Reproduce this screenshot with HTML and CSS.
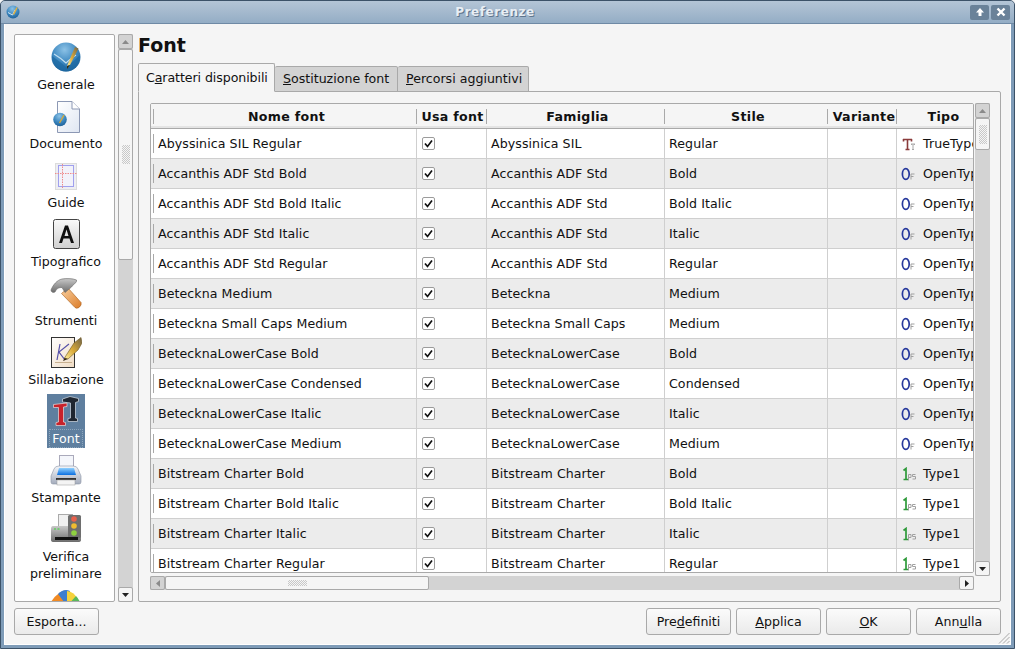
FILE: index.html
```html
<!DOCTYPE html>
<html lang="it">
<head>
<meta charset="utf-8">
<title>Preferenze</title>
<link rel="stylesheet" href="styles.css">
</head>
<body>
<svg class="defs" width="0" height="0" aria-hidden="true">
  <defs>
    <radialGradient id="globe" cx="45%" cy="25%" r="80%"><stop offset="0" stop-color="#8cc2e6"/><stop offset=".55" stop-color="#3d88c0"/><stop offset="1" stop-color="#1a5c94"/></radialGradient>
    <linearGradient id="quill" x1="1" y1="0" x2="0" y2="1"><stop offset="0" stop-color="#6e6248"/><stop offset=".55" stop-color="#d8a838"/><stop offset="1" stop-color="#fff0a0"/></linearGradient>
    <linearGradient id="paper" x1="0" y1="0" x2="1" y2="1"><stop offset="0" stop-color="#ffffff"/><stop offset="1" stop-color="#dfe6f2"/></linearGradient>
    <linearGradient id="keycap" x1="0" y1="0" x2="0" y2="1"><stop offset="0" stop-color="#fafafa"/><stop offset="1" stop-color="#d0d0d0"/></linearGradient>
    <linearGradient id="handle" x1="0" y1="0" x2="1" y2="1"><stop offset="0" stop-color="#f8d0a0"/><stop offset="1" stop-color="#dc7c28"/></linearGradient>
    <linearGradient id="metal" x1="0" y1="0" x2="0" y2="1"><stop offset="0" stop-color="#c8c8c8"/><stop offset="1" stop-color="#6c6c6c"/></linearGradient>
    <linearGradient id="printer" x1="0" y1="0" x2="0" y2="1"><stop offset="0" stop-color="#f4f6fa"/><stop offset="1" stop-color="#a4acbc"/></linearGradient>
    <linearGradient id="bluebar" x1="0" y1="0" x2="0" y2="1"><stop offset="0" stop-color="#8fd0ff"/><stop offset="1" stop-color="#0b6fe0"/></linearGradient>
    <linearGradient id="kpaper" x1="0" y1="0" x2="1" y2="1"><stop offset="0" stop-color="#ffffff"/><stop offset="1" stop-color="#f0dcc4"/></linearGradient>
    <symbol id="i-check" viewBox="0 0 13 13">
      <rect x=".5" y=".5" width="12" height="12" rx="1.5" fill="#fff" stroke="#9c9c9c"/>
      <path d="M3 6.500 5.500 9.500 10 3.500" fill="none" stroke="#111" stroke-width="1.700"/>
    </symbol>
    <symbol id="i-tt" viewBox="0 0 16 14">
      <path d="M2 2.500H11M2.500 2V4.500M10.500 2V4.500M6.500 2.500V12.500M4.500 12.500H8.500" fill="none" stroke="#8a3b3b" stroke-width="1.600"/>
      <path d="M10 7H14M10.500 7V8M13.500 7V8M12 7V12.500M11 12.500H13" fill="none" stroke="#a8a8a8" stroke-width="1"/>
    </symbol>
    <symbol id="i-ot" viewBox="0 0 16 14">
      <ellipse cx="4.800" cy="7" rx="3.400" ry="5.300" fill="none" stroke="#26389c" stroke-width="1.700"/>
      <path d="M10 12.500V7H13.500M10 9.500H12.500" fill="none" stroke="#a0a0a0" stroke-width="1"/>
    </symbol>
    <symbol id="i-t1" viewBox="0 0 16 14">
      <path d="M2.500 3.500 5 1.500V12.500M2.500 12.500H7" fill="none" stroke="#2e9a3a" stroke-width="1.700"/>
      <path d="M7.500 13.500V7.500H10V10.500H7.500M14.500 7.500H11.500V9.500H14.500V12H11.500" fill="none" stroke="#a0a0a0" stroke-width="1"/>
    </symbol>
  </defs>
</svg>

<div class="window">
  <header class="titlebar">
    <svg class="app-icon" viewBox="0 0 14 14"><circle cx="7" cy="7" r="6.500" fill="url(#globe)"/><path d="M2 7.500 6.500 10 9 5" fill="none" stroke="#cfe6f5" stroke-width="1"/><path d="M7.500 9.500 11 2.500" stroke="#e0b040" stroke-width="1.500"/></svg>
    <span class="title">Preferenze</span>
    <div class="wm-buttons">
      <span class="wm-btn"><svg viewBox="0 0 10 10" width="10" height="10"><path d="M5 1 9 5.500H6.500V9h-3V5.500H1Z" fill="#fff"/></svg></span>
      <span class="wm-btn"><svg viewBox="0 0 10 10" width="10" height="10"><path d="M1.500 1.500 8.500 8.500M8.500 1.500 1.500 8.500" stroke="#fff" stroke-width="2.400"/></svg></span>
    </div>
  </header>

  <div class="content">
    <div class="main">
      <nav class="sidebar">
        <div class="nav-item">
          <svg class="nav-icon" viewBox="0 0 32 32"><circle cx="16" cy="15" r="14.500" fill="url(#globe)"/><path d="M2 14C6 17 12 21 16 25 20 22 25 18 30 13 30 23 24 29.500 16 29.500 8 29.500 2 23 2 14Z" fill="#1d6aa3" opacity=".7"/><path d="M4 12C9 15 13 18 16 21 19 18 22 16 26 13" fill="none" stroke="#c3e0f2" stroke-width="1.200"/><path d="M17 24 25 5 28.500 6.500 20 23Z" fill="url(#quill)"/><path d="M17 24 17 27 20 23Z" fill="#3a2d10"/></svg>
          <span class="nav-label">Generale</span>
        </div>
        <div class="nav-item">
          <svg class="nav-icon" viewBox="0 0 32 32"><path d="M7.500 .5H22L29.500 8V31.500H7.500Z" fill="url(#paper)" stroke="#8c98b4"/><path d="M22 .5V8H29.500" fill="#fff" stroke="#8c98b4"/><circle cx="10" cy="18.500" r="6.800" fill="url(#globe)"/><path d="M9.500 22 14 14" stroke="#d9aa3a" stroke-width="1.400"/></svg>
          <span class="nav-label">Documento</span>
        </div>
        <div class="nav-item">
          <svg class="nav-icon" viewBox="0 0 32 32"><rect x="5.500" y="3.500" width="21" height="26" fill="#eeeef2" stroke="#dcdcdc"/><rect x="8.500" y="5.500" width="15" height="21" fill="#f2f2fa" stroke="#a0a0ee"/><path d="M5 13.500H27M12.500 4V29" stroke="#ee8c8c" stroke-dasharray="1.500 1"/></svg>
          <span class="nav-label">Guide</span>
        </div>
        <div class="nav-item">
          <svg class="nav-icon" viewBox="0 0 32 32"><rect x="3.500" y=".5" width="26" height="29" rx="2" fill="url(#keycap)" stroke="#444"/><path d="M9 24 15 6.500H18L24 24H21L19.500 19.500H13.500L12 24ZM14.500 17H18.500L16.500 10.500Z" fill="#111" fill-rule="evenodd"/></svg>
          <span class="nav-label">Tipografico</span>
        </div>
        <div class="nav-item">
          <svg class="nav-icon" viewBox="0 0 32 32"><path d="M11.500 15.500 18 10 31 24.500Q32 27 29 29.500 26.500 31 25 29.500Z" fill="url(#handle)" stroke="#a85c18" stroke-width=".6"/><path d="M1 12C3 7 7 2 12 1 17 .2 23 .5 26.500 2 27 4 25 5.500 24 6L21.500 9 15 14.500 12 9.500C9 9.500 7 10 5 14 3 15 1 14 1 12Z" fill="url(#metal)" stroke="#666" stroke-width=".6"/></svg>
          <span class="nav-label">Strumenti</span>
        </div>
        <div class="nav-item">
          <svg class="nav-icon" viewBox="0 0 32 32"><rect x="1.500" y=".5" width="23" height="30" fill="url(#kpaper)" stroke="#333"/><path d="M5 25.500H22" stroke="#c8b090"/><path d="M10 7 7 23M19 7 9 15 15 23" fill="none" stroke="#5550a8" stroke-width="1.200"/><path d="M14.500 21 24 6 31 .5 32 6 28 13 18 22Z" fill="url(#quill)" stroke="#6b5520" stroke-width=".6"/><path d="M14.500 21 13 24 18 22Z" fill="#302410"/></svg>
          <span class="nav-label">Sillabazione</span>
        </div>
        <div class="nav-item is-selected">
          <svg class="nav-icon" viewBox="0 0 32 32"><path d="M12.500 3 20 .5 28.500 2.500V5.500L25.500 6.500V22L27.500 22.500V25.500L18 25.500V22.500L20.500 22V7L12.500 6Z" fill="#1f2630" stroke="#c4ced8" stroke-width=".8"/><path d="M3.500 8.500 17 7V10.500L13.500 11V26L15.500 26.500V29.500H6V26.500L8.500 26V11.500L3.500 11.500Z" fill="#c8222a" stroke="#e8dcdc" stroke-width=".7"/></svg>
          <span class="nav-label">Font</span>
        </div>
        <div class="nav-item">
          <svg class="nav-icon" viewBox="0 0 32 32"><rect x="9.500" y=".5" width="14" height="13" fill="#f4f6fb" stroke="#aab"/><path d="M4 14Q5 11 9 11H23Q27 11 28 14L31 21V27Q31 29 29 29H3Q1 29 1 27V21Z" fill="url(#printer)" stroke="#8c94a4" stroke-width=".6"/><path d="M7 20H26L24 13H9Z" fill="url(#bluebar)"/><rect x="6" y="23" width="20" height="2" fill="#333"/><rect x="7" y="25" width="18" height="5" fill="#f4f4f4" stroke="#999" stroke-width=".5"/></svg>
          <span class="nav-label">Stampante</span>
        </div>
        <div class="nav-item">
          <svg class="nav-icon" viewBox="0 0 32 32"><rect x="8.500" y=".5" width="14" height="14" fill="#f0f0f0" stroke="#aaa"/><path d="M3 12H28Q31 12 31 15V26Q31 28 28 28H4Q1 28 1 26V15Q1 12 3 12Z" fill="url(#metal)"/><rect x="18" y="1" width="13" height="23" rx="1.500" fill="#6e6e6e"/><circle cx="24" cy="5" r="2.800" fill="#e8604c"/><circle cx="24" cy="12" r="2.800" fill="#f0bc30"/><circle cx="24" cy="19" r="2.800" fill="#8ed040"/><path d="M4 15H6M7.500 15H9.500" stroke="#5fd060" stroke-width="1.500"/><rect x="5" y="23" width="23" height="3" fill="#111"/></svg>
          <span class="nav-label">Verifica<br>preliminare</span>
        </div>
        <div class="nav-item">
          <svg class="nav-icon" viewBox="0 0 32 32"><path d="M1 12Q8 1 17 0L16 15Z" fill="#f08a24"/><path d="M8 4Q14-2 20 1L17 16Z" fill="#3c7ed0"/><path d="M17 1Q24 2 27 8L17 16Z" fill="#f5d23c"/><path d="M26 6Q30 10 31 16L17 16Z" fill="#58b85c"/></svg>
        </div>
      </nav>

      <div class="scrollbar scrollbar-v sidebar-scroll">
        <span class="sb-btn is-off"><svg viewBox="0 0 7 4" width="7" height="4"><path d="M3.500 0 7 4H0Z" fill="#8a8a8a"/></svg></span>
        <span class="sb-thumb sidebar-thumb"><span class="grip grip-tall"></span></span>
        <span class="sb-trough"></span>
        <span class="sb-btn"><svg viewBox="0 0 7 4" width="7" height="4"><path d="M0 0H7L3.500 4Z" fill="#222"/></svg></span>
      </div>

      <section class="pane">
        <h1 class="pane-title">Font</h1>
        <div class="tabs">
          <span class="tab is-active">C<u>a</u>ratteri disponibili</span>
          <span class="tab tab-subst"><u>S</u>ostituzione font</span>
          <span class="tab tab-paths"><u>P</u>ercorsi aggiuntivi</span>
        </div>
        <div class="tab-panel">
          <div class="table-col">
            <div class="table">
              <div class="row head">
                <span class="cell">Nome font</span><span class="cell">Usa font</span><span class="cell">Famiglia</span><span class="cell">Stile</span><span class="cell">Variante</span><span class="cell">Tipo</span>
              </div>
              <div class="row"><span class="cell">Abyssinica SIL Regular</span><span class="cell"><svg class="check"><use href="#i-check"/></svg></span><span class="cell">Abyssinica SIL</span><span class="cell">Regular</span><span class="cell"></span><span class="cell"><svg class="ft"><use href="#i-tt"/></svg>TrueType</span></div>
              <div class="row"><span class="cell">Accanthis ADF Std Bold</span><span class="cell"><svg class="check"><use href="#i-check"/></svg></span><span class="cell">Accanthis ADF Std</span><span class="cell">Bold</span><span class="cell"></span><span class="cell"><svg class="ft"><use href="#i-ot"/></svg>OpenType</span></div>
              <div class="row"><span class="cell">Accanthis ADF Std Bold Italic</span><span class="cell"><svg class="check"><use href="#i-check"/></svg></span><span class="cell">Accanthis ADF Std</span><span class="cell">Bold Italic</span><span class="cell"></span><span class="cell"><svg class="ft"><use href="#i-ot"/></svg>OpenType</span></div>
              <div class="row"><span class="cell">Accanthis ADF Std Italic</span><span class="cell"><svg class="check"><use href="#i-check"/></svg></span><span class="cell">Accanthis ADF Std</span><span class="cell">Italic</span><span class="cell"></span><span class="cell"><svg class="ft"><use href="#i-ot"/></svg>OpenType</span></div>
              <div class="row"><span class="cell">Accanthis ADF Std Regular</span><span class="cell"><svg class="check"><use href="#i-check"/></svg></span><span class="cell">Accanthis ADF Std</span><span class="cell">Regular</span><span class="cell"></span><span class="cell"><svg class="ft"><use href="#i-ot"/></svg>OpenType</span></div>
              <div class="row"><span class="cell">Beteckna Medium</span><span class="cell"><svg class="check"><use href="#i-check"/></svg></span><span class="cell">Beteckna</span><span class="cell">Medium</span><span class="cell"></span><span class="cell"><svg class="ft"><use href="#i-ot"/></svg>OpenType</span></div>
              <div class="row"><span class="cell">Beteckna Small Caps Medium</span><span class="cell"><svg class="check"><use href="#i-check"/></svg></span><span class="cell">Beteckna Small Caps</span><span class="cell">Medium</span><span class="cell"></span><span class="cell"><svg class="ft"><use href="#i-ot"/></svg>OpenType</span></div>
              <div class="row"><span class="cell">BetecknaLowerCase Bold</span><span class="cell"><svg class="check"><use href="#i-check"/></svg></span><span class="cell">BetecknaLowerCase</span><span class="cell">Bold</span><span class="cell"></span><span class="cell"><svg class="ft"><use href="#i-ot"/></svg>OpenType</span></div>
              <div class="row"><span class="cell">BetecknaLowerCase Condensed</span><span class="cell"><svg class="check"><use href="#i-check"/></svg></span><span class="cell">BetecknaLowerCase</span><span class="cell">Condensed</span><span class="cell"></span><span class="cell"><svg class="ft"><use href="#i-ot"/></svg>OpenType</span></div>
              <div class="row"><span class="cell">BetecknaLowerCase Italic</span><span class="cell"><svg class="check"><use href="#i-check"/></svg></span><span class="cell">BetecknaLowerCase</span><span class="cell">Italic</span><span class="cell"></span><span class="cell"><svg class="ft"><use href="#i-ot"/></svg>OpenType</span></div>
              <div class="row"><span class="cell">BetecknaLowerCase Medium</span><span class="cell"><svg class="check"><use href="#i-check"/></svg></span><span class="cell">BetecknaLowerCase</span><span class="cell">Medium</span><span class="cell"></span><span class="cell"><svg class="ft"><use href="#i-ot"/></svg>OpenType</span></div>
              <div class="row"><span class="cell">Bitstream Charter Bold</span><span class="cell"><svg class="check"><use href="#i-check"/></svg></span><span class="cell">Bitstream Charter</span><span class="cell">Bold</span><span class="cell"></span><span class="cell"><svg class="ft"><use href="#i-t1"/></svg>Type1</span></div>
              <div class="row"><span class="cell">Bitstream Charter Bold Italic</span><span class="cell"><svg class="check"><use href="#i-check"/></svg></span><span class="cell">Bitstream Charter</span><span class="cell">Bold Italic</span><span class="cell"></span><span class="cell"><svg class="ft"><use href="#i-t1"/></svg>Type1</span></div>
              <div class="row"><span class="cell">Bitstream Charter Italic</span><span class="cell"><svg class="check"><use href="#i-check"/></svg></span><span class="cell">Bitstream Charter</span><span class="cell">Italic</span><span class="cell"></span><span class="cell"><svg class="ft"><use href="#i-t1"/></svg>Type1</span></div>
              <div class="row"><span class="cell">Bitstream Charter Regular</span><span class="cell"><svg class="check"><use href="#i-check"/></svg></span><span class="cell">Bitstream Charter</span><span class="cell">Regular</span><span class="cell"></span><span class="cell"><svg class="ft"><use href="#i-t1"/></svg>Type1</span></div>
            </div>
            <div class="scrollbar scrollbar-h">
              <span class="sb-btn is-off"><svg viewBox="0 0 4 7" width="4" height="7"><path d="M0 3.500 4 0V7Z" fill="#8a8a8a"/></svg></span>
              <span class="sb-thumb table-hthumb"><span class="grip grip-wide"></span></span>
              <span class="sb-trough"></span>
              <span class="sb-btn"><svg viewBox="0 0 4 7" width="4" height="7"><path d="M4 3.500 0 0V7Z" fill="#222"/></svg></span>
            </div>
          </div>
          <div class="scrollbar scrollbar-v table-vscroll">
            <span class="sb-btn is-off"><svg viewBox="0 0 7 4" width="7" height="4"><path d="M3.500 0 7 4H0Z" fill="#8a8a8a"/></svg></span>
            <span class="sb-thumb table-vthumb"><span class="grip grip-small"></span></span>
            <span class="sb-trough"></span>
            <span class="sb-btn"><svg viewBox="0 0 7 4" width="7" height="4"><path d="M0 0H7L3.500 4Z" fill="#222"/></svg></span>
          </div>
        </div>
      </section>
    </div>

    <footer class="footer">
      <button class="btn" type="button">Esporta...</button>
      <div class="footer-actions">
        <button class="btn" type="button">Pre<u>d</u>efiniti</button>
        <button class="btn" type="button"><u>A</u>pplica</button>
        <button class="btn" type="button"><u>O</u>K</button>
        <button class="btn" type="button">Ann<u>u</u>lla</button>
      </div>
    </footer>
    <svg class="resize-grip" viewBox="0 0 12 12" width="12" height="12"><path d="M1 11.500 11.500 1M5 11.500 11.500 5M9 11.500 11.500 9" fill="none" stroke="#a8a8a8"/></svg>
  </div>
</div>
</body>
</html>
```
FILE: styles.css
```css
* { box-sizing: border-box; }
html, body { margin: 0; height: 100%; }
body {
  width: 1015px;
  height: 649px;
  overflow: hidden;
  font-family: "DejaVu Sans", sans-serif;
  font-size: 12.6px;
  color: #111;
  background: #f5f5f5;
}
.defs { display: block; height: 0; }

.window {
  height: 649px;
  display: flex;
  flex-direction: column;
  border: 1px solid #3c5268;
  border-radius: 5px 5px 0 0;
  background: #7f9cb8;
  padding: 0 3px 3px;
  overflow: hidden;
}
.titlebar {
  flex: 0 0 23px;
  margin: 0 -3px;
  padding: 0 5px;
  display: flex;
  align-items: center;
  background: linear-gradient(#b4c5d6, #94adc5);
  border-bottom: 1px solid #6f8aa5;
}
.app-icon { width: 14px; height: 14px; flex: none; }
.title {
  flex: 1;
  text-align: center;
  color: #e8eef4;
  font-weight: 700;
  letter-spacing: .55px;
  font-size: 12px;
  text-shadow: 1px 1px 0 #5d748c;
}
.wm-buttons { display: flex; gap: 2px; margin-right: -1px; }
.wm-btn {
  width: 19px;
  height: 15px;
  border-radius: 2px;
  display: flex;
  align-items: center;
  justify-content: center;
  background: #6a8299;
}

.content {
  flex: 1;
  min-height: 0;
  position: relative;
  display: flex;
  flex-direction: column;
  background: #f5f5f5;
  border: 1px solid #fff;
  border-top: 0;
  padding: 10px 9px 9px;
}
.main { display: flex; height: 568px; }
.resize-grip { position: absolute; right: 0; bottom: 0; }

/* sidebar */
.sidebar {
  flex: 0 0 101px;
  background: #fff;
  border: 1px solid #a9a9a9;
  border-radius: 2px;
  padding: 5px 0 0 3px;
  overflow: hidden;
  display: flex;
  flex-direction: column;
  align-items: center;
  gap: 5px;
}
.nav-item {
  flex: none;
  display: flex;
  flex-direction: column;
  align-items: center;
  padding: 2px 2px 1px;
}
.nav-icon { width: 32px; height: 32px; flex: none; margin-bottom: 2px; }
.nav-label {
  display: block;
  text-align: center;
  line-height: 17px;
  padding: 0 1px;
  border: 1px dotted transparent;
  margin: -1px 0;
  white-space: nowrap;
}
.is-selected { background: #5f7f9f; }
.is-selected .nav-label { color: #fff; border-color: #8da6bd; padding: 0 2px; }

/* scrollbars */
.scrollbar { display: flex; background: #d3d3d3; flex: none; }
.scrollbar-v { flex-direction: column; width: 15px; }
.scrollbar-h { height: 14px; width: 824px; }
.sidebar-scroll { margin: 0 5px 0 3px; }
.table-vscroll { height: 473px; margin-left: 1px; }
.sb-btn {
  flex: 0 0 15px;
  display: flex;
  align-items: center;
  justify-content: center;
  background: #f5f5f5;
  border: 1px solid #a9a9a9;
  border-radius: 2px;
}
.sb-btn.is-off { background: #d3d3d3; }
.sb-trough { flex: 1; }
.sb-thumb {
  flex: none;
  display: flex;
  align-items: center;
  justify-content: center;
  background: #f5f5f5;
  border: 1px solid #a9a9a9;
  border-radius: 2px;
}
.sidebar-thumb { height: 211px; }
.table-vthumb { height: 32px; }
.table-hthumb { width: 264px; }
.grip {
  display: block;
  background: repeating-conic-gradient(#c8c8c8 0 25%, transparent 0 50%) 0 0 / 2px 2px;
}
.grip-tall { width: 8px; height: 19px; }
.grip-small { width: 8px; height: 19px; }
.grip-wide { width: 19px; height: 6px; }

/* right pane */
.pane {
  flex: 1;
  min-width: 0;
  display: flex;
  flex-direction: column;
}
.pane-title {
  margin: 0;
  height: 29px;
  font-size: 19px;
  line-height: 22px;
  font-weight: 700;
  color: #111;
}
.tabs { display: flex; height: 29px; align-items: flex-end; position: relative; z-index: 1; margin-bottom: -1px; }
.tab {
  height: 26px;
  line-height: 24px;
  padding: 0 0 0 8px;
  background: #d3d3d3;
  border: 1px solid #a9a9a9;
  border-left-width: 0;
  border-radius: 2px 2px 0 0;
  white-space: nowrap;
}
.tab.is-active {
  width: 137px;
  height: 29px;
  line-height: 27px;
  background: #f5f5f5;
  border-left-width: 1px;
  border-bottom-color: #f5f5f5;
  padding-left: 7px;
  letter-spacing: -.08px;
}
.tab-subst { width: 123px; }
.tab-paths { width: 131px; }
.tab-panel {
  flex: 1;
  min-height: 0;
  display: flex;
  align-items: flex-start;
  padding: 11px;
  border: 1px solid #a9a9a9;
  border-radius: 0 2px 2px 2px;
  background: #f5f5f5;
}
.table-col { display: flex; flex-direction: column; gap: 3px; }

/* table */
.table {
  width: 824px;
  height: 470px;
  overflow: hidden;
  background: #fff;
  border: 1px solid #a9a9a9;
  border-radius: 2px;
}
.row {
  display: grid;
  grid-template-columns: 266px 70px 178px 163px 69px 77px;
  height: 30px;
  border-bottom: 1px solid #cfcfcf;
  background: #fff;
}
.row:nth-child(odd) { background: #ececec; }
.row.head {
  height: 25px;
  background: #f5f5f5;
  font-weight: 700;
  border-bottom: 1px solid #a9a9a9;
  box-shadow: inset 0 -2px 0 #e4e4e4;
}
.cell {
  display: flex;
  align-items: center;
  padding-left: 4px;
  border-right: 1px solid #cfcfcf;
  overflow: hidden;
  white-space: nowrap;
  letter-spacing: .07px;
}
.cell:first-child {
  padding-left: 7px;
  background: linear-gradient(#a9a9a9, #a9a9a9) 2px center / 1px 19px no-repeat;
}
.cell:last-child { border-right: 0; }
.head .cell {
  justify-content: center;
  padding: 0 0 0 3px;
  border-right: 0;
  letter-spacing: .3px;
  background: linear-gradient(#a9a9a9, #a9a9a9) right center / 1px 15px no-repeat;
}
.head .cell:first-child {
  padding-left: 5px;
  background:
    linear-gradient(#a9a9a9, #a9a9a9) 2px center / 1px 15px no-repeat,
    linear-gradient(#a9a9a9, #a9a9a9) right center / 1px 15px no-repeat;
}
.head .cell:nth-child(2) { padding-left: 1px; }
.head .cell:last-child { padding-left: 16px; background: none; }
.row:not(.head) .cell:nth-child(2) { padding-left: 0; }
.check { width: 13px; height: 13px; margin-left: 5px; flex: none; }
.ft { width: 16px; height: 14px; margin-right: 6px; flex: none; }

/* footer */
.footer {
  flex: none;
  margin-top: 6px;
  display: flex;
  justify-content: space-between;
}
.footer-actions { display: flex; gap: 5px; }
.btn {
  height: 27px;
  width: 85px;
  padding: 0;
  font: inherit;
  color: #111;
  background: linear-gradient(#fbfbfb, #eaeaea);
  border: 1px solid #a9a9a9;
  border-radius: 3px;
}
```
